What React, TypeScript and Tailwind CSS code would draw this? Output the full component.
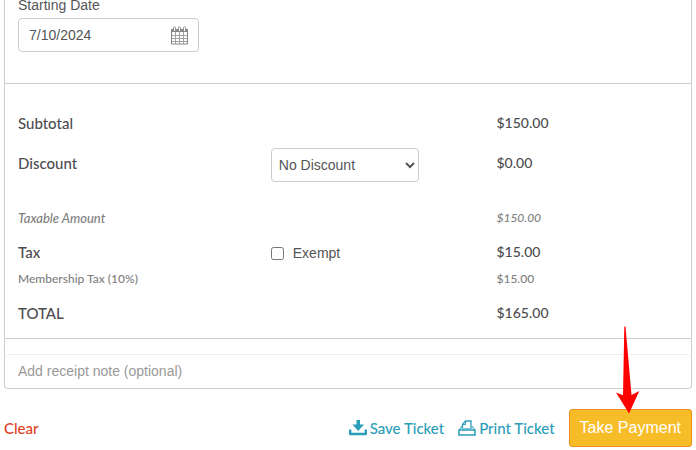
import { useState } from "react";

const rowLabel = "p-0 align-top text-left text-[15px] leading-5 font-medium text-[#4d4d4f]";
const rowAmount = "p-0 align-top text-sm leading-5 font-medium text-[#4d4d4f]";
const subLabel = "p-0 pt-[5px] align-top text-left leading-5 font-medium text-[#808080]";
const subAmount = "p-0 pt-[5px] align-top text-xs leading-5 font-medium text-[#808080]";

const CalendarIcon = () => (
  <svg width="17" height="19" viewBox="0 0 17 19" fill="none" aria-hidden="true">
    <path d="M.5 4h16v14H.5z" fill="#fff" stroke="#858585" />
    <path d="M0 3h17v3H0z" fill="#858585" />
    <path d="M4.500 6v12M8.500 6v12M12.5 6v12M1 9.500h15M1 12.500h15M1 15.500h15" stroke="#a2a2a2" />
    <path d="M2.5 5V2c0-2 2-2 2 0v3M7.5 5V2c0-2 2-2 2 0v3M12.5 5V2c0-2 2-2 2 0v3" stroke="#959595" />
    <path d="M3.5 2v3M8.5 2v3M13.5 2v3" stroke="#fff" />
  </svg>
);

const SaveIcon = () => (
  <svg width="18" height="16" viewBox="0 0 18 16" aria-hidden="true">
    <path d="M7.5 0h3.500v4.500H15L9.200 11 3.500 4.500h4z" fill="#2a9db8" />
    <path d="M1.200 9.500v4.500h15.600V9.500" fill="none" stroke="#2a9db8" strokeWidth="2.400" strokeLinejoin="round" />
  </svg>
);

const PrintIcon = () => (
  <svg width="18" height="16" viewBox="0 0 18 16" fill="none" stroke="#2a9db8" aria-hidden="true">
    <path d="M4 6L1.500 10M14 6L16.500 10" stroke="#7cc3d3" strokeWidth="1.500" />
    <path d="M4.5 8.500V4.5l3-3.500h5.500v7.500" strokeWidth="1.300" />
    <path d="M4.5 4.5h3V1" />
    <path d="M4 8.500h10" stroke="#7cc3d3" />
    <path d="M1 10h16v5H1z" strokeWidth="1.500" />
  </svg>
);

const App: React.FC = () => {
  const [date, setDate] = useState("7/10/2024");
  const [discount, setDiscount] = useState("none");
  const [exempt, setExempt] = useState(false);
  const [note, setNote] = useState("");

  return (
    <main className="bg-white px-1 font-['Lato',sans-serif]">
      <section className="rounded-b border-x border-[#cccccc]">
        <div className="border-b border-[#cccccc] px-[13px] pb-[31px]">
          <label
            htmlFor="start-date"
            className="mb-2 block font-['Liberation_Sans',sans-serif] text-sm leading-[10px] text-[#555555]"
          >
            Starting Date
          </label>
          <div className="flex h-[34px] w-[181px] items-center rounded border border-[#cccccc] px-[10px]">
            <input
              id="start-date"
              type="text"
              value={date}
              onChange={(e) => setDate(e.target.value)}
              className="min-w-0 flex-1 font-['Liberation_Sans',sans-serif] text-sm text-[#555555] outline-none"
            />
            <button type="button" aria-label="Open calendar">
              <CalendarIcon />
            </button>
          </div>
        </div>

        <div className="border-b border-[#cccccc] px-[13px] pt-[19px]">
          <table className="w-full table-fixed border-collapse text-left">
            <colgroup>
              <col className="w-[38.3%]" />
              <col className="w-[34.2%]" />
              <col />
            </colgroup>
            <tbody>
              <tr className="h-10">
                <th scope="row" className={`${rowLabel} pt-[10px]`}>Subtotal</th>
                <td />
                <td className={`${rowAmount} pt-[10px]`}>$150.00</td>
              </tr>
              <tr className="h-[60px]">
                <th scope="row" className={`${rowLabel} pt-[10px]`}>
                  <label htmlFor="discount">Discount</label>
                </th>
                <td className="p-0 pt-[5px] align-top">
                  <select
                    id="discount"
                    value={discount}
                    onChange={(e) => setDiscount(e.target.value)}
                    className="block h-[34px] w-[148px] rounded border border-[#cccccc] bg-white pl-[3px] font-['Liberation_Sans',sans-serif] text-sm text-[#555555]"
                  >
                    <option value="none">No Discount</option>
                  </select>
                </td>
                <td className={`${rowAmount} pt-[10px]`}>$0.00</td>
              </tr>
              <tr className="h-[34px] italic">
                <th scope="row" className={`${subLabel} text-[13px]`}>Taxable Amount</th>
                <td />
                <td className={subAmount}>$150.00</td>
              </tr>
              <tr className="h-[27px]">
                <th scope="row" className={`${rowLabel} pt-[5px]`}>Tax</th>
                <td className="p-0 pt-[6px] align-top">
                  <label className="flex items-center gap-[9px] font-['Liberation_Sans',sans-serif] text-sm leading-5 text-[#555555]">
                    <input
                      type="checkbox"
                      checked={exempt}
                      onChange={(e) => setExempt(e.target.checked)}
                      className="size-[13px]"
                    />
                    Exempt
                  </label>
                </td>
                <td className={`${rowAmount} pt-[5px]`}>$15.00</td>
              </tr>
              <tr className="h-[34px]">
                <th scope="row" className={`${subLabel} text-xs`}>Membership Tax (10%)</th>
                <td />
                <td className={subAmount}>$15.00</td>
              </tr>
              <tr className="h-10">
                <th scope="row" className={`${rowLabel} pt-[5px]`}>TOTAL</th>
                <td />
                <td className={`${rowAmount} pt-[5px]`}>$165.00</td>
              </tr>
            </tbody>
          </table>
        </div>

        <div className="pt-[15px]">
          <input
            type="text"
            aria-label="Receipt note"
            placeholder="Add receipt note (optional)"
            value={note}
            onChange={(e) => setNote(e.target.value)}
            className="block h-[35px] w-full rounded border-t border-b border-t-[#eeeeee] border-b-[#cccccc] px-[13px] pb-[2px] font-['Liberation_Sans',sans-serif] text-sm text-[#555555] outline-none placeholder:text-[#999999]"
          />
        </div>
      </section>

      <footer className="mt-5 flex items-center text-[15px] font-medium text-[#2a9db8]">
        <button type="button" className="mr-auto text-[#e0401f]">
          Clear
        </button>
        <button type="button" className="mr-[14px] flex items-center gap-[3px]">
          <SaveIcon />
          Save Ticket
        </button>
        <button type="button" className="mr-[14px] flex items-center gap-[3px]">
          <PrintIcon />
          Print Ticket
        </button>
        <div className="relative">
          <button
            type="button"
            className="block h-[38px] rounded-[3px] border border-[#f0921e] bg-[#f7bd29] px-[10px] font-['Liberation_Sans',sans-serif] text-base font-normal text-white"
          >
            Take Payment
          </button>
          <svg
            className="pointer-events-none absolute bottom-[33px] left-[47px]"
            width="24"
            height="88"
            viewBox="0 0 24 88"
            aria-hidden="true"
          >
            <path d="M8.3 .5h1.2L15.5 69l7.8-4L13 87.500 0 66.500l7 2.800z" fill="#ff0000" />
          </svg>
        </div>
      </footer>
    </main>
  );
};

export default App;
